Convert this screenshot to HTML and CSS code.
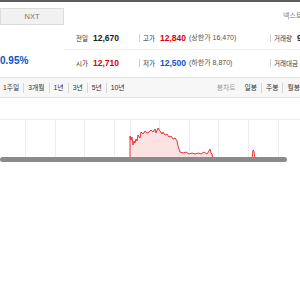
FILE: index.html
```html
<!DOCTYPE html>
<html lang="ko">
<head>
    <meta charset="UTF-8">
    <title>시세</title>
    <link rel="stylesheet" href="styles.css">
</head>
<body>
    <div class="topbar"></div>
    <div class="wrap">
        <div class="summary">
            <div class="side">
                <div class="nxt">NXT</div>
                <div class="rate">0.95%</div>
            </div>
            <div class="info">
                <div class="market">넥스트레이드</div>
                <div class="row first">
                    <div class="cell c1"><span class="lbl">전일</span><b class="num">12,670</b></div>
                    <div class="cell c2"><span class="sep"></span><span class="lbl">고가</span><b class="num up">12,840</b><span class="lim">(상한가 16,470)</span></div>
                    <div class="cell c3"><span class="sep"></span><span class="lbl">거래량</span><b class="num">9,815</b></div>
                </div>
                <div class="row">
                    <div class="cell c1"><span class="lbl">시가</span><b class="num up">12,710</b></div>
                    <div class="cell c2"><span class="sep"></span><span class="lbl">저가</span><b class="num down">12,500</b><span class="lim">(하한가 8,870)</span></div>
                    <div class="cell c3"><span class="sep"></span><span class="lbl">거래대금</span><b class="num">124</b></div>
                </div>
            </div>
        </div>

        <div class="bar">
            <ul class="periods">
                <li>1주일</li>
                <li>3개월</li>
                <li>1년</li>
                <li>3년</li>
                <li>5년</li>
                <li>10년</li>
            </ul>
            <ul class="candles">
                <li class="title">봉차트</li>
                <li>일봉</li>
                <li>주봉</li>
                <li>월봉</li>
            </ul>
        </div>

        <svg class="chart" width="300" height="59" viewBox="0 98 300 59">
            <g stroke="#ededed" stroke-width="1">
                <line x1="0" y1="119.5" x2="300" y2="119.5"/>
                <line x1="25.5" y1="119" x2="25.5" y2="157"/>
                <line x1="55.5" y1="119" x2="55.5" y2="157"/>
                <line x1="84.5" y1="119" x2="84.5" y2="157"/>
                <line x1="114.5" y1="119" x2="114.5" y2="157"/>
                <line x1="130.5" y1="119" x2="130.5" y2="157"/>
                <line x1="159.5" y1="119" x2="159.5" y2="157"/>
                <line x1="189.5" y1="119" x2="189.5" y2="157"/>
                <line x1="218.5" y1="119" x2="218.5" y2="157"/>
                <line x1="248.5" y1="119" x2="248.5" y2="157"/>
                <line x1="278.5" y1="119" x2="278.5" y2="157"/>
            </g>
            <path fill="#fde2e3" d="M130 160 L130 136 L131 140 L132 137 L133 145 L134 141 L135 143 L136 139 L137 141 L138 135 L140 138 L141 132 L143 134 L145 131 L147 133 L149 132 L151 130 L153 132 L155 129 L156 133 L158 128 L160 131 L162 134 L163 132 L165 135 L167 134 L169 137 L171 136 L173 139 L175 138 L177 141 L178 146 L180 152 L183 153 L186 152 L189 154 L192 153 L195 154 L198 153 L201 154 L204 152 L207 154 L209 151 L210 149 L211 153 L212 154 L213 160 Z"/>
            <path fill="none" stroke="#e8313b" stroke-width="1" d="M130 160 L130 136 L131 140 L132 137 L133 145 L134 141 L135 143 L136 139 L137 141 L138 135 L140 138 L141 132 L143 134 L145 131 L147 133 L149 132 L151 130 L153 132 L155 129 L156 133 L158 128 L160 131 L162 134 L163 132 L165 135 L167 134 L169 137 L171 136 L173 139 L175 138 L177 141 L178 146 L180 152 L183 153 L186 152 L189 154 L192 153 L195 154 L198 153 L201 154 L204 152 L207 154 L209 151 L210 149 L211 153 L212 154 L213 160 M252 160 L253 150 L254 151 L255 160"/>
        </svg>

        <div class="scroll"><div class="thumb"></div></div>
    </div>
</body>
</html>
```

FILE: styles.css
```css
*{
    padding: 0;
    margin: 0;
    box-sizing: border-box;
}
body{
    background: #fff;
    overflow: hidden;
    font-family: "Liberation Sans", "Noto Sans CJK KR", sans-serif;
    color: #333;
}
.topbar{
    height: 2px;
    background: #5c5c5c;
}
.wrap{
    width: 300px;
}
.summary{
    display: flex;
    height: 75px;
}
.side{
    width: 64px;
    flex: none;
}
.nxt{
    margin-top: 6px;
    height: 17px;
    background: #f1f1f1;
    border: 1px solid #dcdcdc;
    text-align: center;
    font-size: 7.5px;
    line-height: 15px;
    color: #777;
}
.rate{
    margin-top: 30px;
    font-size: 10px;
    font-weight: bold;
    line-height: 12px;
    color: #0a54c9;
}
.info{
    flex: none;
    width: 236px;
    white-space: nowrap;
}
.market{
    height: 24px;
    padding-top: 3px;
    padding-left: 219px;
    font-size: 7px;
    line-height: 22px;
    color: #777;
}
.row{
    display: flex;
    align-items: center;
    height: 26px;
}
.row.first{
    height: 24px;
    border-bottom: 1px solid #efefef;
}
.cell{
    flex: none;
    display: flex;
    align-items: center;
}
.c1{
    width: 75px;
    padding-left: 12px;
}
.c2{
    width: 131px;
}
.sep{
    width: 1px;
    height: 8px;
    background: #cfcfcf;
    margin-right: 3px;
}
.lbl{
    font-family: "Noto Sans CJK KR", sans-serif;
    font-size: 6.5px;
    line-height: 10px;
    color: #333;
    margin-right: 5px;
}
.num{
    font-size: 8.5px;
    line-height: 10px;
    color: #222;
}
.num.up{
    color: #d8000c;
}
.num.down{
    color: #0a54c9;
}
.lim{
    margin-left: 3px;
    font-size: 7px;
    line-height: 10px;
    color: #555;
}
.bar{
    display: flex;
    justify-content: space-between;
    align-items: center;
    height: 21px;
    background: #f7f7f7;
    border-top: 1px solid #e3e3e3;
    border-bottom: 1px solid #e3e3e3;
    white-space: nowrap;
}
.bar ul{
    display: flex;
    align-items: center;
    list-style: none;
}
.bar li{
    font-size: 6.8px;
    line-height: 10px;
    color: #333;
    padding: 0 4px;
    border-left: 1px solid #d6d6d6;
}
.periods{
    padding-left: 3px;
}
.bar li:first-child{
    padding-left: 0;
    border-left: none;
}
.candles li.title{
    color: #9a9a9a;
    padding-right: 9px;
}
.candles li.title + li{
    border-left: none;
    padding-left: 0;
}
.candles li:last-child{
    padding-right: 0;
}
.chart{
    display: block;
}
.scroll{
    height: 6px;
    padding-top: 0;
}
.thumb{
    width: 287px;
    height: 5px;
    border-radius: 3px;
    background: #8b8b8b;
}
```
